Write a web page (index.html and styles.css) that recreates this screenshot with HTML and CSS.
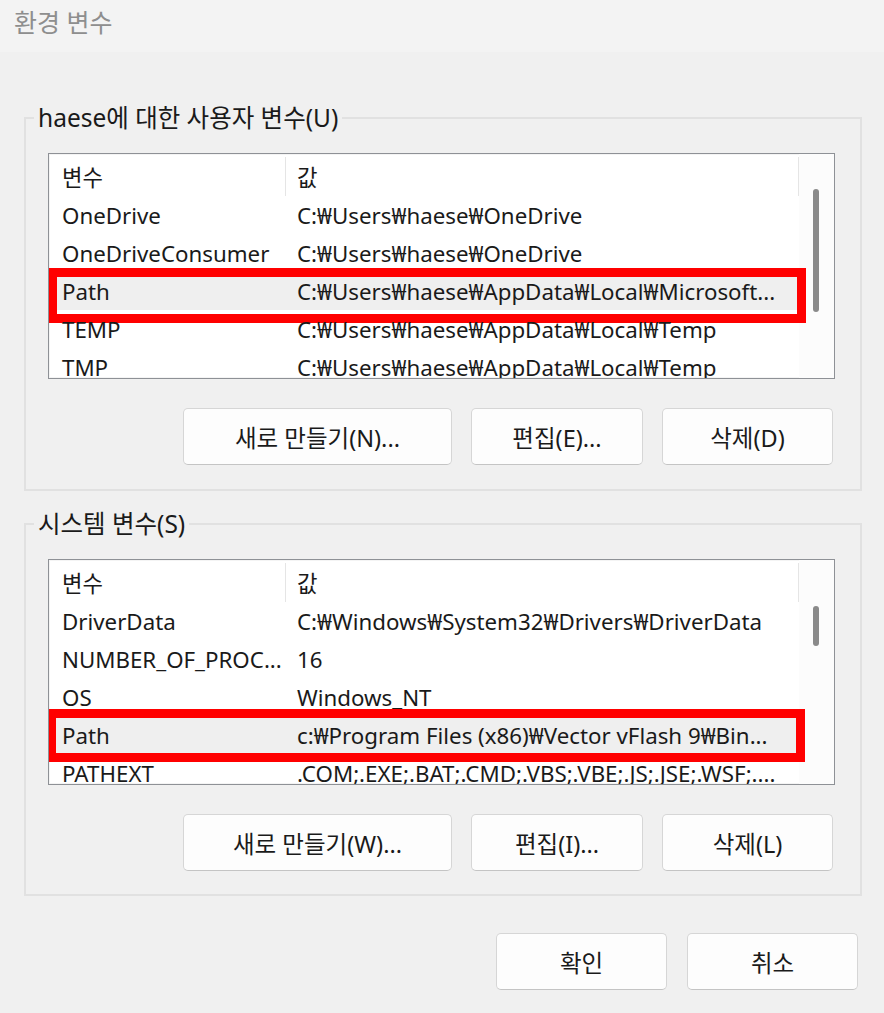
FILE: index.html
```html
<!DOCTYPE html>
<html lang="ko">
<head>
<meta charset="utf-8">
<title>환경 변수</title>
<link rel="stylesheet" href="styles.css">
</head>
<body>
<div class="titlebar">환경 변수</div>

<fieldset class="group group-user">
  <legend>haese에 대한 사용자 변수(U)</legend>
  <div class="list">
    <div class="list-body">
      <div class="row head"><div class="c1">변수</div><div class="c2">값</div></div>
      <div class="row"><div class="c1">OneDrive</div><div class="c2">C:₩Users₩haese₩OneDrive</div></div>
      <div class="row"><div class="c1">OneDriveConsumer</div><div class="c2">C:₩Users₩haese₩OneDrive</div></div>
      <div class="row sel mark-a"><div class="c1">Path</div><div class="c2">C:₩Users₩haese₩AppData₩Local₩Microsoft...</div><div class="redbox"></div></div>
      <div class="row"><div class="c1">TEMP</div><div class="c2">C:₩Users₩haese₩AppData₩Local₩Temp</div></div>
      <div class="row"><div class="c1">TMP</div><div class="c2">C:₩Users₩haese₩AppData₩Local₩Temp</div></div>
    </div>
    <div class="scroll"><div class="thumb thumb-a"></div></div>
  </div>
  <div class="btns">
    <button class="btn btn-new">새로 만들기(N)...</button>
    <button class="btn btn-edit">편집(E)...</button>
    <button class="btn btn-del">삭제(D)</button>
  </div>
</fieldset>

<fieldset class="group group-sys">
  <legend>시스템 변수(S)</legend>
  <div class="list">
    <div class="list-body">
      <div class="row head"><div class="c1">변수</div><div class="c2">값</div></div>
      <div class="row"><div class="c1">DriverData</div><div class="c2">C:₩Windows₩System32₩Drivers₩DriverData</div></div>
      <div class="row"><div class="c1">NUMBER_OF_PROC...</div><div class="c2">16</div></div>
      <div class="row"><div class="c1">OS</div><div class="c2">Windows_NT</div></div>
      <div class="row sel mark-b"><div class="c1">Path</div><div class="c2">c:₩Program Files (x86)₩Vector vFlash 9₩Bin...</div><div class="redbox"></div></div>
      <div class="row"><div class="c1">PATHEXT</div><div class="c2">.COM;.EXE;.BAT;.CMD;.VBS;.VBE;.JS;.JSE;.WSF;....</div></div>
    </div>
    <div class="scroll"><div class="thumb thumb-b"></div></div>
  </div>
  <div class="btns">
    <button class="btn btn-new">새로 만들기(W)...</button>
    <button class="btn btn-edit">편집(I)...</button>
    <button class="btn btn-del">삭제(L)</button>
  </div>
</fieldset>

<div class="footer">
  <button class="btn btn-foot">확인</button>
  <button class="btn btn-foot">취소</button>
</div>
</body>
</html>
```

FILE: styles.css
```css
* { box-sizing: border-box; }

html, body {
  margin: 0;
  padding: 0;
  background: #f0f0f0;
}

body {
  width: 884px;
  height: 1013px;
  overflow: hidden;
  font-family: "Noto Sans", "Noto Sans CJK KR", sans-serif;
  font-size: 22.3px;
  color: #1a1a1a;
}

.titlebar {
  height: 52px;
  background: #f3f3f3;
  padding-left: 14px;
  line-height: 44px;
  font-size: 25px;
  color: #8e8e8e;
}

.group {
  margin: 51px 22px 0 24px;
  border: 2px solid #e1e1e1;
  padding: 20px 25px 24px 8px;
  min-width: 0;
}

.group-sys {
  margin-top: 18px;
  padding-bottom: 23px;
}

.group legend {
  padding: 0 4px;
  font-size: 24.5px;
  line-height: 30px;
  color: #1a1a1a;
}

.list {
  margin-left: 14px;
  height: 226px;
  display: flex;
  overflow: hidden;
  background: #fff;
  border: 1px solid #8e9196;
  box-shadow: inset 0 0 0 1px #f4f4f4;
}

.list-body {
  width: 750px;
  flex: none;
}

.row {
  display: flex;
  height: 38px;
  align-items: center;
  position: relative;
  white-space: nowrap;
}

.row.head {
  height: 42px;
  padding-top: 2px;
  align-items: stretch;
}

.row.head .c1,
.row.head .c2 {
  display: flex;
  align-items: center;
  border-right: 1px solid #e5e5e5;
  margin-top: 1px;
}

.c1 {
  width: 237px;
  padding-left: 13px;
  padding-right: 2px;
  overflow: hidden;
  flex: none;
}

.c2 {
  width: 513px;
  padding-left: 11px;
  overflow: hidden;
  flex: none;
}

.row.sel {
  background: #efefef;
}

.redbox {
  position: absolute;
  border: 9px solid #ff0000;
  width: 758px;
  pointer-events: none;
}

.mark-a .redbox {
  left: -1px;
  top: -4px;
  height: 55px;
}

.mark-b .redbox {
  left: -2px;
  top: -7px;
  height: 53px;
}

.scroll {
  width: 35px;
  flex: none;
  background: #fcfcfc;
}

.thumb {
  width: 6px;
  margin-left: 14px;
  background: #8a8a8a;
  border-radius: 3px;
}

.thumb-a {
  margin-top: 35px;
  height: 123px;
}

.thumb-b {
  margin-top: 46px;
  height: 40px;
}

.btns {
  display: flex;
  justify-content: flex-end;
  gap: 19px;
  margin-top: 29px;
  margin-right: 2px;
}

.btn {
  height: 57px;
  background: #fdfdfd;
  border: 1px solid #d6d6d6;
  border-bottom-color: #c4c4c4;
  border-radius: 5px;
  font-family: "Noto Sans", "Noto Sans CJK KR", sans-serif;
  font-size: 23.5px;
  color: #1a1a1a;
  padding: 0;
}

.btn-new { width: 269px; }
.btn-edit { width: 172px; }
.btn-del { width: 171px; }

.footer {
  display: flex;
  justify-content: flex-end;
  gap: 20px;
  margin: 37px 26px 0 0;
}

.btn-foot { width: 171px; }
```
